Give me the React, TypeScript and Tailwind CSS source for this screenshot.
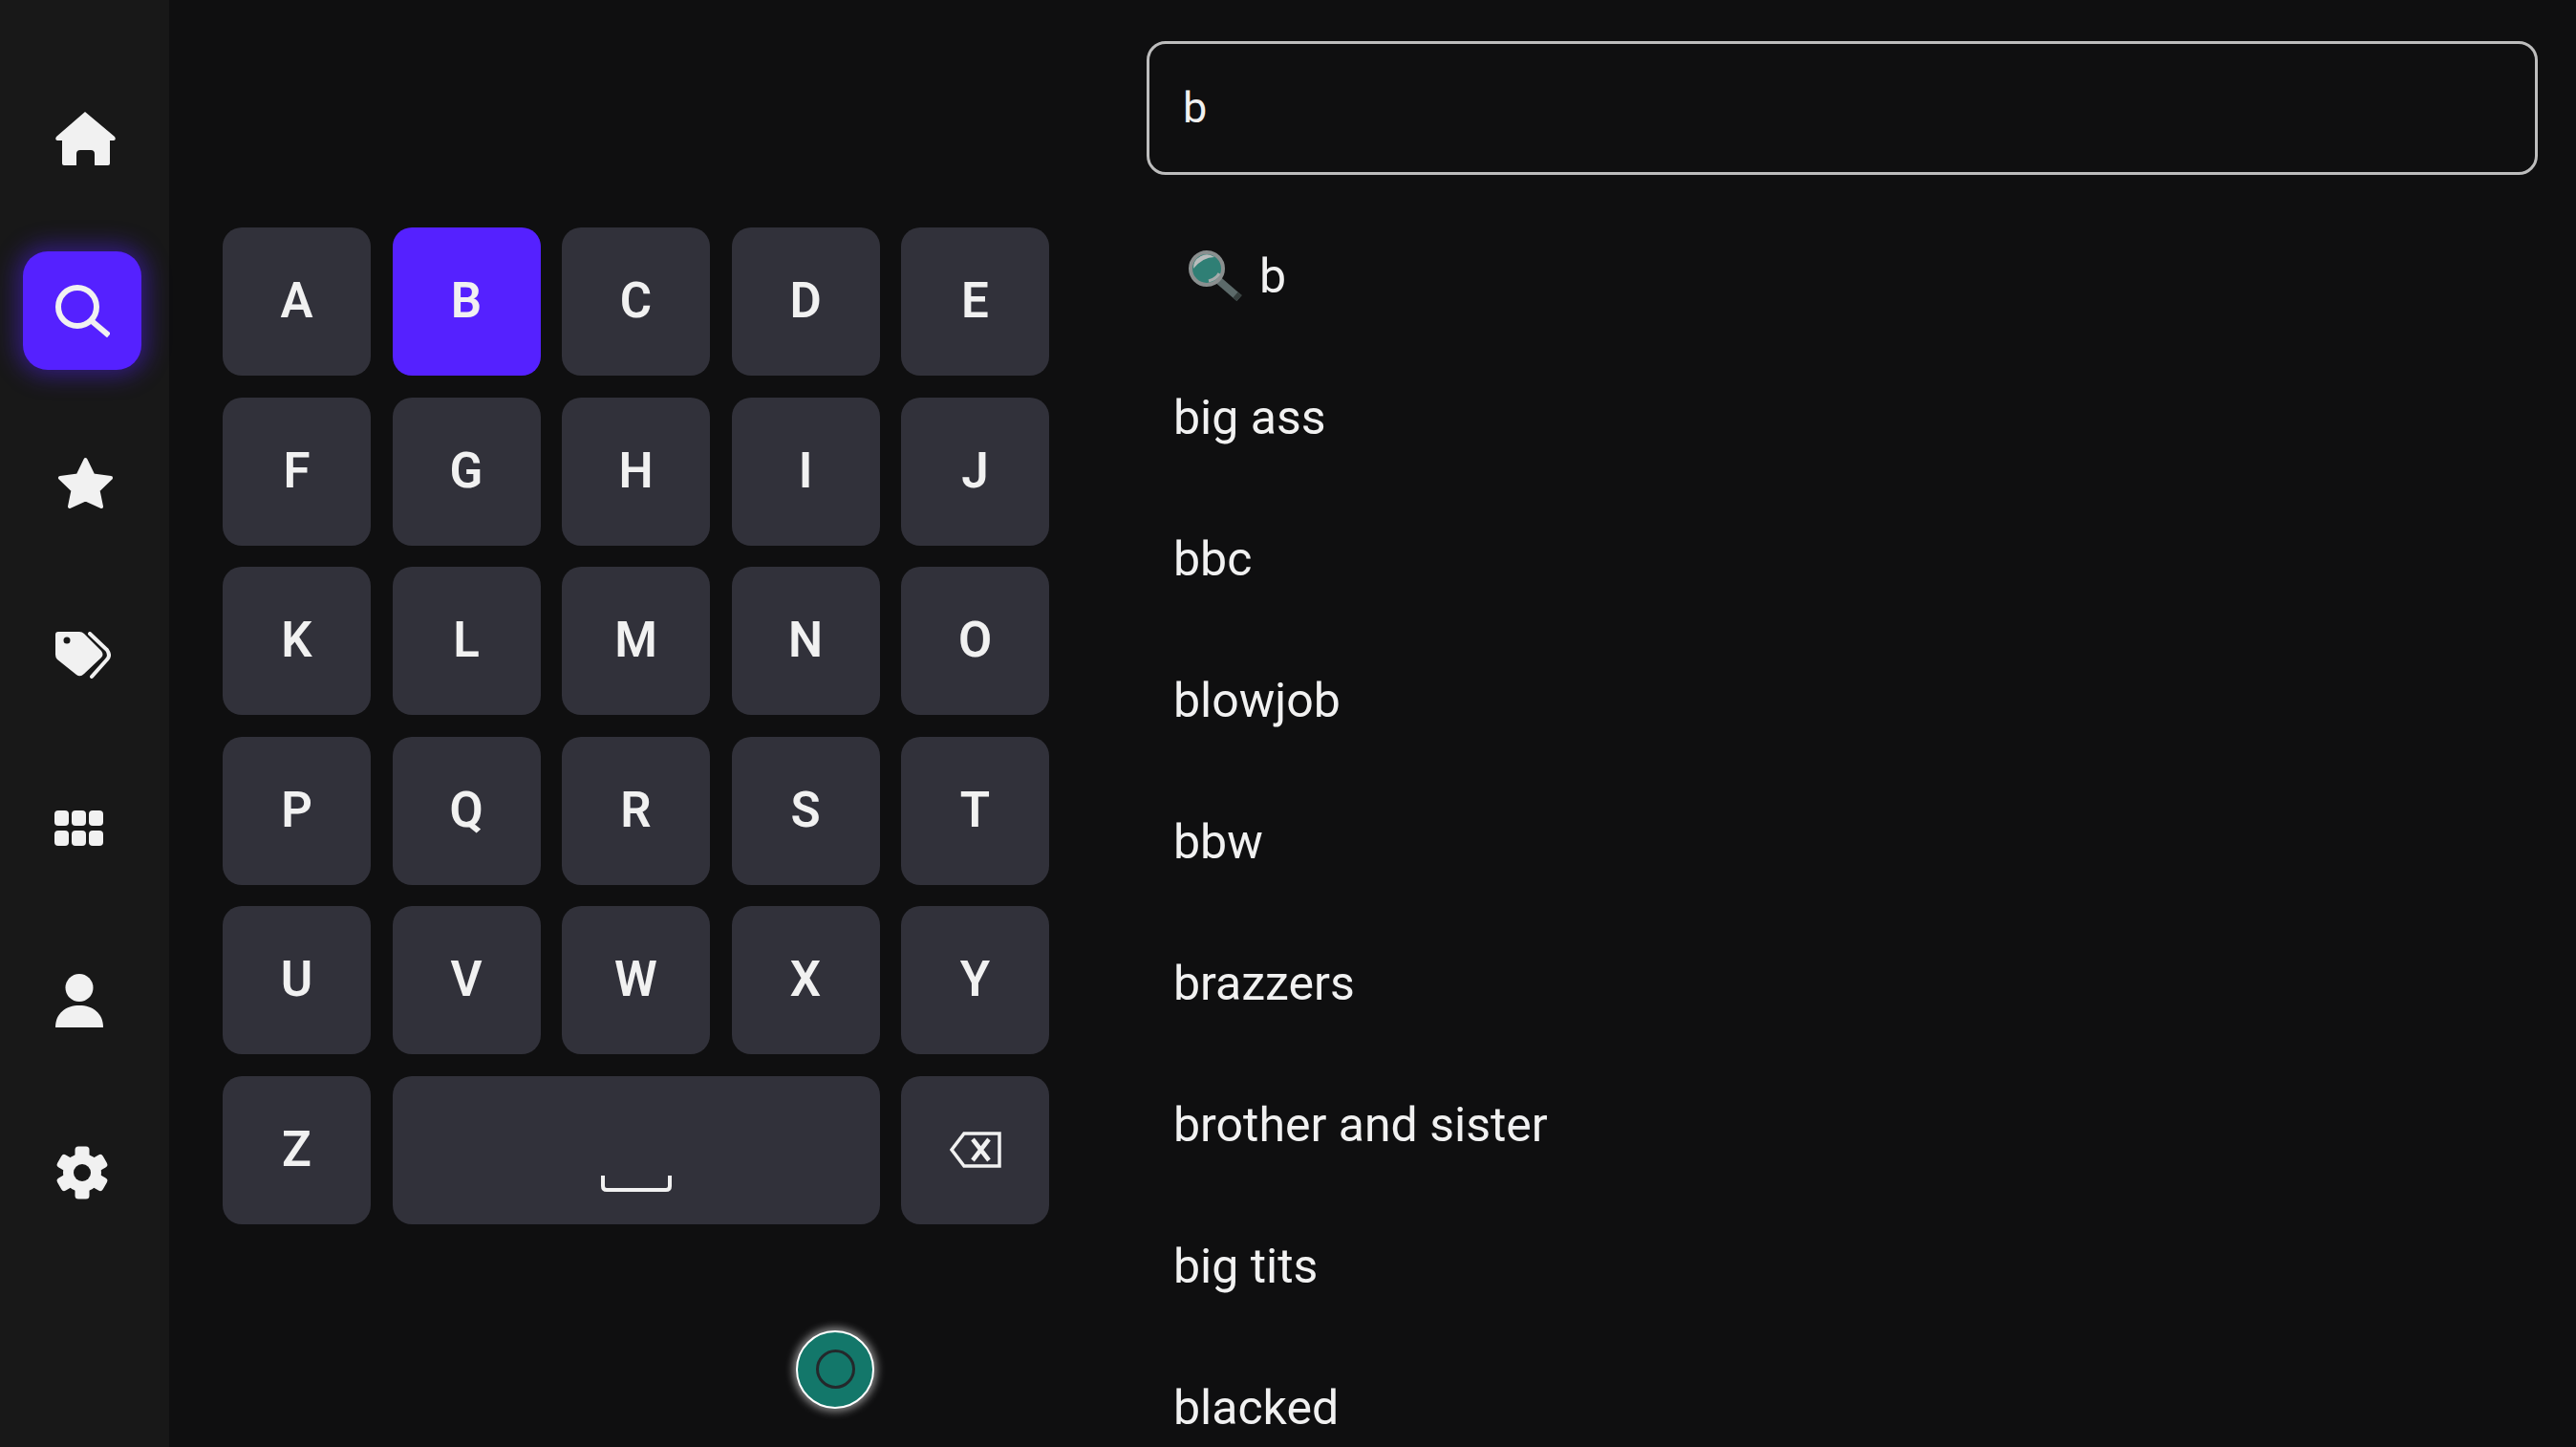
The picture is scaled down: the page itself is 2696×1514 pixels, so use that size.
import React from "react";

const ROWS = [
  ["A", "B", "C", "D", "E"],
  ["F", "G", "H", "I", "J"],
  ["K", "L", "M", "N", "O"],
  ["P", "Q", "R", "S", "T"],
  ["U", "V", "W", "X", "Y"],
];

const SUGGESTIONS = ["big ass", "bbc", "blowjob", "bbw", "brazzers", "brother and sister", "big tits", "blacked"];

const HomeIcon = () => (
  <svg width="65" height="56" viewBox="0 0 65 56" fill="#f1f1f1">
    <path d="M32 0 L63 26 Q65 29 62 30 L58 30 V54 Q58 56 56 56 H42 V44 Q42 40 38 40 H27 Q23 40 23 44 V56 H10 Q8 56 8 54 V30 H3 Q0 29 2 26 Z" />
  </svg>
);

const SearchIcon = () => (
  <svg width="57" height="55" viewBox="0 0 57 55" fill="none" stroke="#f1f1f1" strokeWidth="6">
    <circle cx="23" cy="23" r="20" />
    <path d="M37 37 L56 53" />
  </svg>
);

const StarIcon = () => (
  <svg width="59" height="55" viewBox="0 0 59 55" fill="#f1f1f1" stroke="#f1f1f1" strokeWidth="4" strokeLinejoin="round">
    <path d="M29.5 3 L37.5 19.5 L56 22 L42.5 35 L46 52 L29.5 44.5 L13 52 L16.5 35 L3 22 L21.5 19.5 Z" />
  </svg>
);

const TagsIcon = () => (
  <svg width="58" height="50" viewBox="0 0 58 50" fill="none">
    <path d="M3 0 H25 Q28 0 30 2 L48 20 Q51 24 48 27 L30 44 Q26 48 22 45 L2 29 Q0 27 0 24 V3 Q0 0 3 0 Z" fill="#f1f1f1" />
    <circle cx="12" cy="9" r="3.5" fill="#181818" />
    <path d="M36 2 L54 19 Q58 25 54 29 L38 47" stroke="#f1f1f1" strokeWidth="4" strokeLinecap="round" />
  </svg>
);

const GridIcon = () => (
  <svg width="51" height="37" viewBox="0 0 51 37" fill="#f1f1f1">
    {[0, 18, 36].map((x) =>
      [0, 21].map((y) => <rect key={`${x}-${y}`} x={x} y={y} width="15" height="16" rx="4" />)
    )}
  </svg>
);

const PersonIcon = () => (
  <svg width="50" height="56" viewBox="0 0 50 56" fill="#f1f1f1">
    <circle cx="25" cy="14.5" r="14.5" />
    <path d="M0 56 C0 41 11 33 25 33 S50 41 50 56 Z" />
  </svg>
);

const GearIcon = () => (
  <svg width="56" height="56" viewBox="-28 -28 56 56" fill="#f1f1f1">
    <circle r="20" />
    {[0, 60, 120].map((a) => (
      <rect key={a} x="-7.5" y="-27.5" width="15" height="55" rx="3.5" transform={`rotate(${a})`} />
    ))}
    <circle r="9" fill="#181818" />
  </svg>
);

const EmojiGlass = () => (
  <svg width="58" height="56" viewBox="0 0 58 56">
    <path d="M32 32 L54 51" stroke="#5c6a6a" strokeWidth="8" />
    <path d="M50 47.5 L54 51" stroke="#37403f" strokeWidth="8" />
    <circle cx="20" cy="20" r="17" fill="#2f7f75" stroke="#8a8f8f" strokeWidth="4" />
    <path d="M6 20 A14 14 0 0 1 28 8 Q16 8 6 20 Z" fill="#b9bcbc" />
    <path d="M22 33 Q30 31 33 25" stroke="#a7abab" strokeWidth="3" fill="none" />
  </svg>
);

const Key = ({ active, className, children }: { active?: boolean; className?: string; children: React.ReactNode }) => (
  <div
    className={`flex h-[155px] items-center justify-center rounded-[20px] text-[51px] font-semibold text-[#f1f1f1] ${
      active ? "bg-[#5521ff]" : "bg-[#31313a]"
    } ${className ?? ""}`}
  >
    {children}
  </div>
);

export default function App() {
  return (
    <div className="relative flex h-[1514px] w-[2696px] overflow-hidden bg-[#0f0f10] font-['Roboto',sans-serif]">
      <aside className="flex w-[177px] shrink-0 flex-col bg-[#181818] pt-[55px]">
        <div className="flex h-[180px] items-center pl-[57px]"><HomeIcon /></div>
        <div className="flex h-[180px] items-center pl-[24px]">
          <div className="flex h-[124px] w-[124px] items-center justify-center rounded-[26px] bg-[#5521ff] shadow-[0_0_24px_6px_rgba(85,33,255,0.45)]">
            <SearchIcon />
          </div>
        </div>
        <div className="flex h-[180px] items-center pl-[60px]"><StarIcon /></div>
        <div className="flex h-[181px] items-center pl-[58px]"><TagsIcon /></div>
        <div className="flex h-[181px] items-center pl-[57px]"><GridIcon /></div>
        <div className="flex h-[180px] items-center pl-[58px]"><PersonIcon /></div>
        <div className="flex h-[180px] items-center pl-[58px]"><GearIcon /></div>
      </aside>

      <section className="ml-[56px] w-[865px] shrink-0 pt-[238px]">
        <div className="flex flex-col gap-[22.5px]">
          {ROWS.map((row, i) => (
            <div key={i} className="grid grid-cols-5 gap-[22.5px]">
              {row.map((k) => (
                <Key key={k} active={k === "B"}>{k}</Key>
              ))}
            </div>
          ))}
          <div className="grid grid-cols-5 gap-[22.5px]">
            <Key>Z</Key>
            <Key className="col-span-3">
              <svg width="74" height="18" viewBox="0 0 74 18" fill="none" stroke="#f1f1f1" strokeWidth="4" className="mt-[72px]">
                <path d="M2 0 V11 Q2 15 6 15 H68 Q72 15 72 11 V0" />
              </svg>
            </Key>
            <Key>
              <svg width="54" height="38" viewBox="0 0 54 38" fill="none" stroke="#f1f1f1" strokeWidth="3.5">
                <path d="M15 2 H52 V36 H15 L2 19 Z" />
                <path d="M24 8 L41 30 M41 8 L24 30" strokeWidth="4.5" />
              </svg>
            </Key>
          </div>
        </div>
        <div className="ml-[600px] mt-[111px] flex h-[82px] w-[82px] items-center justify-center rounded-full border-2 border-white bg-[#13776a] shadow-[0_0_8px_3px_rgba(255,255,255,0.5)]">
          <div className="h-[41px] w-[41px] rounded-full border-[3px] border-[#24282b] bg-[#13776a]" />
        </div>
      </section>

      <main className="ml-[102px] w-[1456px] shrink-0 pt-[43px]">
        <div className="flex h-[140px] items-center rounded-[20px] border-[3px] border-[#bdbdbd] pl-[35px] text-[45px] text-[#f1f1f1]">
          b
        </div>
        <ul className="mt-[32px] pl-[28px] text-[50px] text-[#f1f1f1]">
          <li className="flex h-[148px] items-center pl-[15px]">
            <EmojiGlass />
            <span className="ml-[17px]">b</span>
          </li>
          {SUGGESTIONS.map((s) => (
            <li key={s} className="flex h-[148px] items-center">{s}</li>
          ))}
        </ul>
      </main>
    </div>
  );
}
